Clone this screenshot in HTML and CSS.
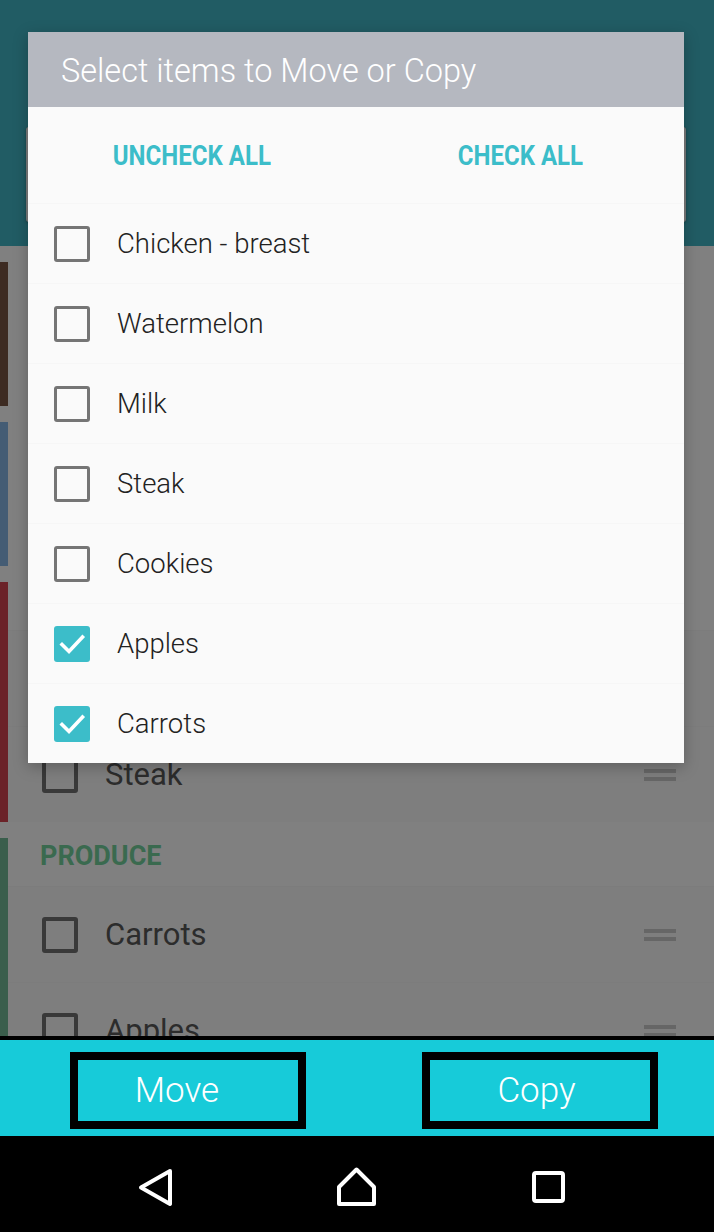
FILE: index.html
```html
<!DOCTYPE html>
<html>
<head>
<meta charset="utf-8">
<link rel="stylesheet" href="styles.css">
</head>
<body>
<div class="screen">
  <div class="main">
    <header class="appbar">
      <div class="search"></div>
    </header>
    <div class="list">
      <section class="section">
        <div class="strip strip-brown"></div>
        <div class="sec-body sec-short"></div>
      </section>
      <section class="section">
        <div class="strip strip-blue"></div>
        <div class="sec-body sec-short"></div>
      </section>
      <section class="section">
        <div class="strip strip-red"></div>
        <div class="sec-body">
          <div class="sec-head"></div>
          <div class="row"></div>
          <div class="row">
            <span class="bg-check"></span>
            <span class="bg-label">Steak</span>
            <span class="handle"></span>
          </div>
        </div>
      </section>
      <section class="section">
        <div class="strip strip-green"></div>
        <div class="sec-body">
          <div class="sec-head produce">PRODUCE</div>
          <div class="row">
            <span class="bg-check"></span>
            <span class="bg-label">Carrots</span>
            <span class="handle"></span>
          </div>
          <div class="row">
            <span class="bg-check"></span>
            <span class="bg-label">Apples</span>
            <span class="handle"></span>
          </div>
        </div>
      </section>
    </div>

    <div class="dialog">
      <div class="dlg-title">Select items to Move or Copy</div>
      <div class="dlg-actions">
        <span class="dlg-btn"><span class="cond">UNCHECK ALL</span></span>
        <span class="dlg-btn"><span class="cond">CHECK ALL</span></span>
      </div>
      <ul class="dlg-list">
        <li class="item"><span class="box"></span><span class="label">Chicken - breast</span></li>
        <li class="item"><span class="box"></span><span class="label">Watermelon</span></li>
        <li class="item"><span class="box"></span><span class="label">Milk</span></li>
        <li class="item"><span class="box"></span><span class="label">Steak</span></li>
        <li class="item"><span class="box"></span><span class="label">Cookies</span></li>
        <li class="item"><span class="box checked"><svg viewBox="0 0 36 36" width="36" height="36"><path d="M8 18.5 L15 25.5 L28.5 11" fill="none" stroke="#fff" stroke-width="3.6" stroke-linecap="square"/></svg></span><span class="label">Apples</span></li>
        <li class="item"><span class="box checked"><svg viewBox="0 0 36 36" width="36" height="36"><path d="M8 18.5 L15 25.5 L28.5 11" fill="none" stroke="#fff" stroke-width="3.6" stroke-linecap="square"/></svg></span><span class="label">Carrots</span></li>
      </ul>
    </div>
  </div>

  <div class="divider"></div>

  <div class="actionbar">
    <button class="act-btn act-move">Move</button>
    <button class="act-btn act-copy">Copy</button>
  </div>

  <nav class="navbar">
    <svg class="nav-ico nav-back" viewBox="0 0 40 40" width="40" height="40"><polygon points="34,4 5,20.5 34,37" fill="none" stroke="#fff" stroke-width="4" stroke-linejoin="round"/></svg>
    <svg class="nav-ico nav-home" viewBox="0 0 40 40" width="40" height="40"><polygon points="20.5,2.5 3,20 3,37 38,37 38,20" fill="none" stroke="#fff" stroke-width="4" stroke-linejoin="round"/></svg>
    <svg class="nav-ico nav-recent" viewBox="0 0 40 40" width="40" height="40"><rect x="6" y="6" width="29" height="28" rx="2" fill="none" stroke="#fff" stroke-width="4"/></svg>
  </nav>
</div>
</body>
</html>
```

FILE: styles.css
```css
html, body {
  margin: 0;
  padding: 0;
}
body {
  width: 714px;
  height: 1232px;
  overflow: hidden;
  font-family: Roboto, "Noto Sans", sans-serif;
  background: #000;
}
.screen {
  display: flex;
  flex-direction: column;
  height: 1232px;
}
.main {
  position: relative;
  height: 1036px;
  overflow: hidden;
  background: #808080;
  flex: none;
}

/* underlying (dimmed) app */
.appbar {
  height: 246px;
  box-sizing: border-box;
  background: #215c64;
  padding: 127px 28px 0 26px;
}
.search {
  height: 95px;
  background: #7c7c7c;
  border-radius: 3px;
  box-shadow: 0 1px 3px rgba(0,0,0,0.3);
}
.list {
  display: flex;
  flex-direction: column;
  gap: 16px;
  padding-top: 16px;
}
.section {
  display: flex;
}
.strip {
  width: 8px;
  flex: none;
}
.strip-brown { background: #3d2b22; }
.strip-blue { background: #445c74; }
.strip-red { background: #6b2228; }
.strip-green { background: #3a5e4c; }
.sec-body {
  flex: 1;
}
.sec-short {
  height: 144px;
}
.sec-head {
  height: 48px;
  display: flex;
  align-items: center;
  padding-left: 32px;
  font-size: 27px;
  font-weight: 700;
  box-sizing: border-box;
}
.produce {
  color: #3a6a4f;
  padding-bottom: 13px;
}
.row {
  height: 96px;
  display: flex;
  align-items: center;
  padding: 0 38px 0 34px;
  background: #7e7e7e;
  border-top: 1px solid #7c7c7c;
  box-sizing: border-box;
}
.bg-check {
  width: 36px;
  height: 36px;
  box-sizing: border-box;
  border: 4px solid #393939;
  border-radius: 3px;
  flex: none;
}
.bg-label {
  flex: 1;
  margin-left: 27px;
  font-size: 31px;
  color: #2c2c2c;
}
.handle {
  width: 32px;
  height: 12px;
  box-sizing: border-box;
  border-top: 4px solid #666;
  border-bottom: 4px solid #666;
  flex: none;
}

/* dialog over the scrim */
.dialog {
  position: absolute;
  left: 28px;
  top: 32px;
  width: 656px;
  background: #fafafa;
  box-shadow: 0 4px 14px rgba(0,0,0,0.25);
}
.dlg-title {
  height: 75px;
  box-sizing: border-box;
  background: #b5b8c0;
  color: #fff;
  font-size: 32.5px;
  font-weight: 300;
  padding: 2px 0 0 33px;
  display: flex;
  align-items: center;
}
.dlg-actions {
  height: 96px;
  display: grid;
  grid-template-columns: 1fr 1fr;
  align-items: center;
  justify-items: center;
}
.dlg-btn {
  color: #3cbdc9;
  font-size: 27px;
  font-weight: 700;
  padding-top: 2px;
}
.cond {
  display: inline-block;
  transform: scaleX(0.89);
}
.dlg-list {
  list-style: none;
  margin: 0;
  padding: 0;
}
.item {
  height: 80px;
  display: flex;
  align-items: center;
  padding-left: 26px;
  border-top: 1px solid #f6f6f6;
  box-sizing: border-box;
}
.box {
  width: 36px;
  height: 36px;
  box-sizing: border-box;
  border: 3.5px solid #757575;
  border-radius: 3px;
  flex: none;
  display: flex;
}
.box.checked {
  border: none;
  background: #3cbdc9;
}
.label {
  margin-left: 27px;
  font-size: 27.5px;
  font-weight: 300;
  color: #222;
}

/* bottom action bar */
.divider {
  height: 4px;
  background: #000;
  flex: none;
}
.actionbar {
  height: 96px;
  flex: none;
  background: #17cbd9;
  display: flex;
  gap: 116px;
  padding: 12px 0 0 70px;
  box-sizing: border-box;
}
.act-btn {
  width: 236px;
  height: 77px;
  box-sizing: border-box;
  border: 8px solid #000;
  background: #17cbd9;
  color: #fff;
  font-family: Roboto, sans-serif;
  font-size: 35px;
  font-weight: 300;
  padding: 0;
  margin: 0;
}
.act-move { padding-right: 22px; }
.act-copy { padding-right: 7px; }

/* system navigation */
.navbar {
  height: 96px;
  flex: none;
  background: #000;
  display: flex;
  align-items: center;
  padding-top: 6px;
  box-sizing: border-box;
}
.nav-back { margin-left: 136px; }
.nav-home { margin-left: 160px; }
.nav-recent { margin-left: 152px; }
```
